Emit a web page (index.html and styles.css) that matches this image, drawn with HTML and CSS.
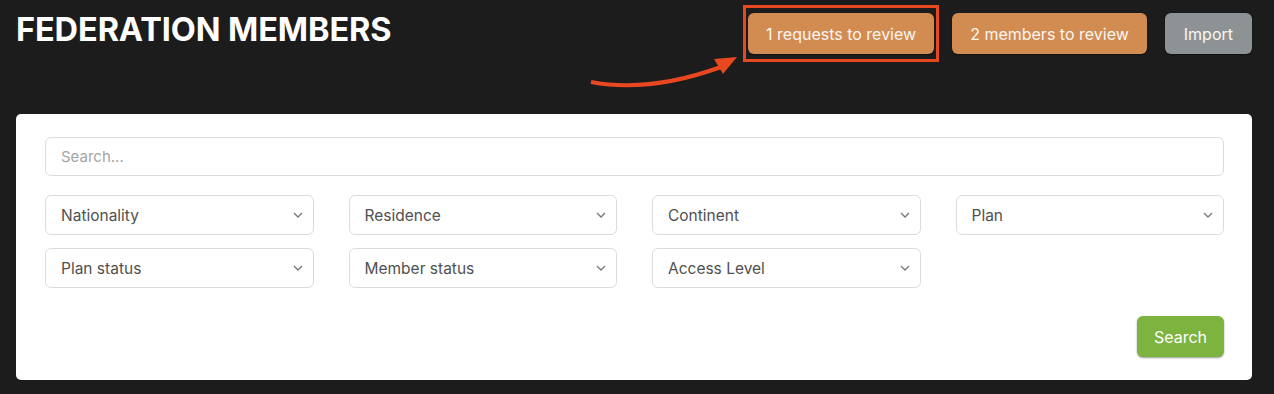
FILE: index.html
```html
<!DOCTYPE html>
<html lang="en">
<head>
    <meta charset="UTF-8">
    <meta name="viewport" content="width=device-width, initial-scale=1.0">
    <title>Federation Members</title>
    <link rel="stylesheet" href="styles.css">
</head>
<body>
    <div class="page">
        <!-- Header -->
        <div class="header">
            <h1 class="title">FEDERATION MEMBERS</h1>
            <div class="actions">
                <div class="highlight">
                    <button class="btn btn-orange">1 requests to review</button>
                </div>
                <button class="btn btn-orange">2 members to review</button>
                <button class="btn btn-gray">Import</button>
            </div>
            <svg class="arrow" width="160" height="40" viewBox="0 0 160 40">
                <path d="M2 27 Q 60 38 132 12" fill="none" stroke="#e8471f" stroke-width="4"/>
                <polygon points="148,2 125,4 134,19" fill="#e8471f"/>
            </svg>
        </div>

        <!-- Filters -->
        <div class="card">
            <input class="search-input" type="text" placeholder="Search...">
            <div class="filters">
                <div class="select"><span>Nationality</span><svg width="10" height="6" viewBox="0 0 10 6"><path d="M1 1l4 4 4-4" fill="none" stroke="#777" stroke-width="1.3"/></svg></div>
                <div class="select"><span>Residence</span><svg width="10" height="6" viewBox="0 0 10 6"><path d="M1 1l4 4 4-4" fill="none" stroke="#777" stroke-width="1.3"/></svg></div>
                <div class="select"><span>Continent</span><svg width="10" height="6" viewBox="0 0 10 6"><path d="M1 1l4 4 4-4" fill="none" stroke="#777" stroke-width="1.3"/></svg></div>
                <div class="select"><span>Plan</span><svg width="10" height="6" viewBox="0 0 10 6"><path d="M1 1l4 4 4-4" fill="none" stroke="#777" stroke-width="1.3"/></svg></div>
                <div class="select"><span>Plan status</span><svg width="10" height="6" viewBox="0 0 10 6"><path d="M1 1l4 4 4-4" fill="none" stroke="#777" stroke-width="1.3"/></svg></div>
                <div class="select"><span>Member status</span><svg width="10" height="6" viewBox="0 0 10 6"><path d="M1 1l4 4 4-4" fill="none" stroke="#777" stroke-width="1.3"/></svg></div>
                <div class="select"><span>Access Level</span><svg width="10" height="6" viewBox="0 0 10 6"><path d="M1 1l4 4 4-4" fill="none" stroke="#777" stroke-width="1.3"/></svg></div>
            </div>
            <div class="card-footer">
                <button class="btn btn-green">Search</button>
            </div>
        </div>
    </div>
</body>
</html>
```

FILE: styles.css
```css
body {
    margin: 0;
    background-color: #1c1c1c;
    font-family: Inter, "Liberation Sans", sans-serif;
}

.page {
    padding: 0 22px 0 16px;
}

/* Header */
.header {
    display: flex;
    justify-content: space-between;
    align-items: flex-start;
    height: 114px;
    position: relative;
}

.title {
    margin: 10px 0 0 0;
    color: white;
    font-size: 32.5px;
    font-weight: 700;
    letter-spacing: -0.1px;
}

.actions {
    display: flex;
    gap: 18px;
    margin-top: 13px;
}

.btn {
    height: 41px;
    border: none;
    border-radius: 6px;
    color: #fbf6f1;
    font-family: Inter, "Liberation Sans", sans-serif;
    font-size: 16px;
    padding: 0 18px;
    cursor: pointer;
    box-shadow: 0 1px 2px rgba(0, 0, 0, 0.4);
}

.btn-orange {
    background-color: #d28b51;
}

.btn-gray {
    background-color: #8d9395;
    padding: 0 19px;
}

.btn-green {
    background-color: #7db33f;
    color: white;
    padding: 0 17px;
}

/* red annotation box round the first button */
.highlight {
    display: flex;
    border: 3px solid #e8471f;
    padding: 5px 2px;
    margin: -8px -5px;
}

.arrow {
    position: absolute;
    left: 573px;
    top: 55px;
}

/* Card */
.card {
    background-color: white;
    border-radius: 5px;
    padding: 23px 28px 23px 29px;
    display: flex;
    flex-direction: column;
}

.search-input {
    height: 39px;
    box-sizing: border-box;
    border: 1.5px solid #dcdcdc;
    border-radius: 6px;
    padding: 0 15px;
    font-family: Inter, "Liberation Sans", sans-serif;
    font-size: 15px;
    color: #444;
}

.search-input::placeholder {
    color: #a5a5a5;
}

.filters {
    display: grid;
    grid-template-columns: repeat(4, 1fr);
    column-gap: 35px;
    row-gap: 13px;
    margin-top: 19px;
}

.select {
    height: 40px;
    box-sizing: border-box;
    border: 1.5px solid #dcdcdc;
    border-radius: 6px;
    padding: 0 10px 0 15px;
    display: flex;
    justify-content: space-between;
    align-items: center;
    color: #505050;
    font-size: 15.5px;
}

.card-footer {
    display: flex;
    justify-content: flex-end;
    margin-top: 28px;
}
```
